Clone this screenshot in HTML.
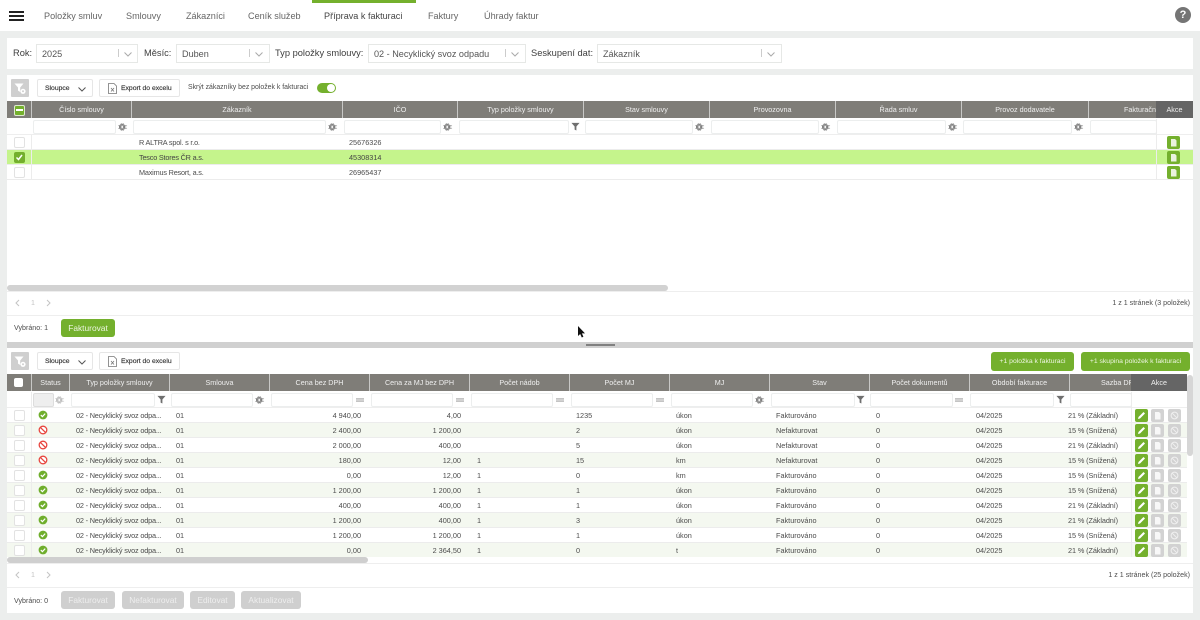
<!DOCTYPE html>
<html lang="cs"><head><meta charset="utf-8"><title>Příprava k fakturaci</title>
<style>
html,body{margin:0;padding:0;width:1200px;height:620px;overflow:hidden;background:#eceeed}
body{font-family:"Liberation Sans",sans-serif;color:#4a4a4a}
#w{position:relative;width:1200px;height:620px;overflow:hidden;filter:blur(.3px)}
.a{position:absolute;white-space:nowrap}
.p{position:absolute;background:#fff}
.nav{top:9px;font-size:9.1px;line-height:14px;color:#666}
.lb{top:46px;font-size:9.3px;line-height:14px;color:#3e3e3e}
.sel{position:absolute;top:44px;height:17px;background:#fff;border:1px solid #e6e8e6;font-size:9.1px;line-height:18px;color:#555;text-indent:5px}
.sep{position:absolute;top:49px;width:1px;height:8px;background:#ccc}
.btn{position:absolute;height:16px;background:#fff;border:1px solid #e6e6e6;border-radius:2px;font-size:6.8px;line-height:17px;color:#333;box-sizing:content-box;-webkit-text-stroke:.15px #333}
.fb{position:absolute;left:11px;width:18px;height:18px;background:#cfcfcf;border-radius:1px}
.h{position:absolute;height:17px;background:#7f7d78;color:#efefef;font-size:7.2px;line-height:17px;text-align:center;border-right:1px solid #c8c8c6;overflow:hidden;white-space:nowrap}
.ak{background:#656565;border-right:0;z-index:3}
.in{position:absolute;height:12px;background:#fff;border:1px solid #eceeee;border-radius:2px;box-sizing:content-box}
.ln{position:absolute;height:1px;background:#eeeeee}
.r{position:absolute;left:7px;height:14px;border-bottom:1px solid #ececec;font-size:7.3px;line-height:15px;color:#4c4c4c}
.r span{position:absolute;white-space:nowrap}
.r .nm{left:132px;letter-spacing:-.2px}
.t{background:#f4f8f0}
.cb{position:absolute;left:6.5px;top:2px;width:9px;height:9px;background:#fff;border:1px solid #e2e2e2;border-radius:2px}
.ty{left:69px;letter-spacing:-.18px}.sm{left:169px}.ce{left:254px;width:100px;text-align:right}.cj{left:354px;width:100px;text-align:right}
.na{left:470px}.mj{left:569px}.me{left:669px}.sv{left:769px}.dk{left:869px}.ob{left:969px}.sa{left:1061px;letter-spacing:-.1px}
.ic{position:absolute;top:1px;width:13px;height:13px;border-radius:2px}
.i1{left:1128px;background:#74b02d}.i2{left:1144px;background:#d2d2d2}.i3{left:1161px;background:#d2d2d2}
.gb{position:absolute;border-radius:3px;background:#74b02d;color:#eef6e2;text-align:center;font-size:8.4px}
.db{position:absolute;top:591px;height:18px;line-height:18px;border-radius:3px;background:#cfcfcf;color:#eeeeee;text-align:center;font-size:8.4px}
.sm2{font-size:7.1px;line-height:12px;color:#4c4c4c}
svg{position:absolute;overflow:visible}
</style></head><body><div id="w">

<svg width="0" height="0" style="left:0;top:0">
<defs>
<symbol id="gear" viewBox="0 0 10 10"><circle cx="4.2" cy="5" r="2.3" fill="none" stroke="#808080" stroke-width="1.9"/><path d="M.3 3.4H8M.3 6.6H8M3.2 1V9M5.2 1V9" stroke="#999" stroke-width=".7"/><circle cx="8.6" cy="3.8" r=".5" fill="#999"/><circle cx="8.6" cy="6.2" r=".5" fill="#999"/></symbol>
<symbol id="fil" viewBox="0 0 10 10"><path d="M.5 1H9.5L6 5V9.5L4 8.5V5Z" fill="#6f6f6f"/></symbol>
<symbol id="eq" viewBox="0 0 10 10"><path d="M0 3.7H10M0 6.3H10" stroke="#888" stroke-width="1.1"/></symbol>
<symbol id="ok" viewBox="0 0 10 10"><circle cx="5" cy="5" r="4.4" fill="#6fae2c"/><path d="M2.8 5.1L4.4 6.6L7.2 3.6" fill="none" stroke="#fff" stroke-width="1.2"/></symbol>
<symbol id="ban" viewBox="0 0 10 10"><circle cx="5" cy="5" r="3.8" fill="#fff" stroke="#e8453f" stroke-width="1.3"/><path d="M2.4 2.4L7.6 7.6" stroke="#e8453f" stroke-width="1.3"/></symbol>
<symbol id="pen" viewBox="0 0 13 13"><path d="M3 10L3.5 8L8.5 3L10 4.5L5 9.5Z" fill="#fff"/></symbol>
<symbol id="doc" viewBox="0 0 13 13"><path d="M4 3H8L9.5 4.5V10.5H4Z" fill="#fff" opacity=".85"/></symbol>
<symbol id="no" viewBox="0 0 13 13"><circle cx="6.5" cy="6.5" r="3.4" fill="none" stroke="#f0f0f0" stroke-width="1"/><path d="M4.2 4.2L8.8 8.8" stroke="#f0f0f0" stroke-width="1"/></symbol>
<symbol id="fb" viewBox="0 0 18 18"><path d="M3.5 4.5H12.5L9.2 8.5V13L7 11.6V8.5Z" fill="#fff"/><circle cx="12" cy="12.3" r="2.6" fill="#fff"/><circle cx="12" cy="12.3" r="1" fill="#cfcfcf"/></symbol>
<symbol id="xl" viewBox="0 0 9 11"><path d="M.5.5H6L8.5 3V10.5H.5Z" fill="#fff" stroke="#777" stroke-width=".8"/><path d="M3 5L6 8.5M6 5L3 8.5" stroke="#777" stroke-width=".8"/></symbol>
<symbol id="chev" viewBox="0 0 8 5"><path d="M.5.5L4 4L7.5.5" fill="none" stroke="currentColor" stroke-width="1"/></symbol>
<symbol id="pg" viewBox="0 0 40 8"><path d="M4 1L1 4L4 7M32 1L35 4L32 7" fill="none" stroke="#c4c4c4" stroke-width="1"/></symbol>
</defs></svg>

<!-- NAV -->
<div class="p" style="left:0;top:0;width:1200px;height:31px"></div>
<div class="a" style="left:312px;top:0;width:104px;height:3px;background:#74b02d"></div>
<div class="a" style="left:9px;top:11px;width:15px;height:2px;background:#222"></div>
<div class="a" style="left:9px;top:15px;width:15px;height:2px;background:#222"></div>
<div class="a" style="left:9px;top:19px;width:15px;height:2px;background:#222"></div>
<div class="a nav" style="left:44px">Položky smluv</div>
<div class="a nav" style="left:126px">Smlouvy</div>
<div class="a nav" style="left:186px">Zákazníci</div>
<div class="a nav" style="left:248px">Ceník služeb</div>
<div class="a nav" style="left:324px;color:#444">Příprava k fakturaci</div>
<div class="a nav" style="left:428px">Faktury</div>
<div class="a nav" style="left:484px">Úhrady faktur</div>
<div class="a" style="left:1175px;top:7px;width:16px;height:16px;border-radius:50%;background:#757575;color:#fff;font-size:11px;font-weight:bold;line-height:16px;text-align:center">?</div>

<!-- FILTER PANEL -->
<div class="p" style="left:7px;top:38px;width:1186px;height:31px"></div>
<div class="a lb" style="left:13px">Rok:</div>
<div class="sel" style="left:36px;width:100px">2025</div><div class="sep" style="left:118px"></div>
<svg width="8" height="5" style="left:124px;top:52px;color:#aaa"><use href="#chev"/></svg>
<div class="a lb" style="left:144px">Měsíc:</div>
<div class="sel" style="left:176px;width:92px">Duben</div><div class="sep" style="left:249px"></div>
<svg width="8" height="5" style="left:255px;top:52px;color:#aaa"><use href="#chev"/></svg>
<div class="a lb" style="left:275px">Typ položky smlouvy:</div>
<div class="sel" style="left:368px;width:156px">02 - Necyklický svoz odpadu</div><div class="sep" style="left:505px"></div>
<svg width="8" height="5" style="left:511px;top:52px;color:#aaa"><use href="#chev"/></svg>
<div class="a lb" style="left:531px">Seskupení dat:</div>
<div class="sel" style="left:597px;width:183px">Zákazník</div><div class="sep" style="left:761px"></div>
<svg width="8" height="5" style="left:767px;top:52px;color:#aaa"><use href="#chev"/></svg>

<!-- PANEL 1 -->
<div class="p" style="left:7px;top:75px;width:1186px;height:267px"></div>
<div class="fb" style="top:79px"><svg width="18" height="18" style="left:0;top:0"><use href="#fb"/></svg></div>
<div class="btn" style="left:37px;top:79px;width:54px"><span class="a" style="left:7px">Sloupce</span><svg width="8" height="5" style="left:40px;top:7px;color:#555"><use href="#chev"/></svg></div>
<div class="btn" style="left:99px;top:79px;width:79px"><svg width="9" height="11" style="left:8px;top:3px"><use href="#xl"/></svg><span class="a" style="left:21px">Export do excelu</span></div>
<div class="a" style="left:188px;top:82px;font-size:6.9px;line-height:12px;color:#4c4c4c">Skrýt zákazníky bez položek k fakturaci</div>
<div class="a" style="left:317px;top:83px;width:19px;height:10px;border-radius:5px;background:#74b02d"></div>
<div class="a" style="left:327px;top:84px;width:8px;height:8px;border-radius:50%;background:#fff"></div>

<div class="h" style="left:7px;top:101px;width:24px"></div>
<div class="a" style="left:14px;top:105px;width:9px;height:9px;background:#74b02d;border:1px solid #dfe9d0;border-radius:2px"></div>
<div class="a" style="left:16px;top:109px;width:7px;height:2px;background:#fff"></div>
<div class="h" style="left:32px;top:101px;width:99px">Číslo smlouvy</div>
<div class="h" style="left:132px;top:101px;width:210px">Zákazník</div>
<div class="h" style="left:343px;top:101px;width:114px">IČO</div>
<div class="h" style="left:458px;top:101px;width:125px">Typ položky smlouvy</div>
<div class="h" style="left:584px;top:101px;width:125px">Stav smlouvy</div>
<div class="h" style="left:710px;top:101px;width:125px">Provozovna</div>
<div class="h" style="left:836px;top:101px;width:125px">Řada smluv</div>
<div class="h" style="left:962px;top:101px;width:126px">Provoz dodavatele</div>
<div class="h" style="left:1089px;top:101px;width:67px;border-right:0;text-indent:35px;text-align:left">Fakturační</div>
<div class="h ak" style="left:1156px;top:101px;width:37px">Akce</div>

<div class="in" style="left:33px;top:120px;width:81px"></div><svg width="10" height="10" style="left:118px;top:122px"><use href="#gear"/></svg>
<div class="in" style="left:133px;top:120px;width:191px"></div><svg width="10" height="10" style="left:328px;top:122px"><use href="#gear"/></svg>
<div class="in" style="left:344px;top:120px;width:95px"></div><svg width="10" height="10" style="left:443px;top:122px"><use href="#gear"/></svg>
<div class="in" style="left:459px;top:120px;width:108px"></div><svg width="9" height="9" style="left:571px;top:122px"><use href="#fil"/></svg>
<div class="in" style="left:585px;top:120px;width:106px"></div><svg width="10" height="10" style="left:695px;top:122px"><use href="#gear"/></svg>
<div class="in" style="left:711px;top:120px;width:106px"></div><svg width="10" height="10" style="left:821px;top:122px"><use href="#gear"/></svg>
<div class="in" style="left:837px;top:120px;width:107px"></div><svg width="10" height="10" style="left:948px;top:122px"><use href="#gear"/></svg>
<div class="in" style="left:963px;top:120px;width:107px"></div><svg width="10" height="10" style="left:1074px;top:122px"><use href="#gear"/></svg>
<div class="in" style="left:1090px;top:120px;width:65px"></div>
<div class="ln" style="left:7px;top:134px;width:1186px"></div>

<div class="r" style="top:135px;width:1186px"><div class="cb"></div><span class="nm">R ALTRA spol. s r.o.</span><span style="left:342px">25676326</span></div>
<div class="r" style="top:150px;width:1186px;background:#c5f48c"><div class="cb" style="background:#74b02d;border-color:#74b02d"></div><svg width="9" height="9" style="left:8px;top:3px"><path d="M1.5 4.5L3.5 6.5L7 2" fill="none" stroke="#fff" stroke-width="1.5"/></svg><span class="nm" style="color:#444">Tesco Stores ČR a.s.</span><span style="left:342px;color:#444">45308314</span></div>
<div class="r" style="top:165px;width:1186px"><div class="cb"></div><span class="nm">Maximus Resort, a.s.</span><span style="left:342px">26965437</span></div>
<div class="a" style="left:31px;top:135px;width:1px;height:45px;background:#ececec"></div>
<div class="a" style="left:1156px;top:119px;width:1px;height:61px;background:#ececec"></div>
<div class="ic" style="left:1167px;top:136px;background:#74b02d"><svg width="13" height="13" style="left:0;top:0"><use href="#doc"/></svg></div>
<div class="ic" style="left:1167px;top:151px;background:#74b02d"><svg width="13" height="13" style="left:0;top:0"><use href="#doc"/></svg></div>
<div class="ic" style="left:1167px;top:166px;background:#74b02d"><svg width="13" height="13" style="left:0;top:0"><use href="#doc"/></svg></div>

<div class="a" style="left:7px;top:285px;width:661px;height:6px;border-radius:3px;background:#d2d2d2"></div>
<div class="ln" style="left:7px;top:291px;width:1186px"></div>
<svg width="40" height="8" style="left:15px;top:299px"><use href="#pg"/></svg>
<div class="a sm2" style="left:31px;top:297px;color:#c4c4c4">1</div>
<div class="a sm2" style="right:10px;top:297px">1 z 1 stránek (3 položek)</div>
<div class="ln" style="left:7px;top:315px;width:1186px"></div>
<div class="a sm2" style="left:14px;top:322px">Vybráno: 1</div>
<div class="gb" style="left:61px;top:319px;width:54px;height:18px;line-height:18px">Fakturovat</div>
<svg width="9" height="12" style="left:577px;top:326px"><path d="M1 0V10L3.2 8L4.8 11.5L6.4 10.8L4.9 7.4H8Z" fill="#111"/></svg>

<!-- SPLITTER -->
<div class="a" style="left:7px;top:342px;width:1186px;height:6px;background:#d0d0d0"></div>
<div class="a" style="left:586px;top:344px;width:29px;height:2px;background:#808080"></div>

<!-- PANEL 2 -->
<div class="p" style="left:7px;top:348px;width:1186px;height:265px"></div>
<div class="fb" style="top:352px"><svg width="18" height="18" style="left:0;top:0"><use href="#fb"/></svg></div>
<div class="btn" style="left:37px;top:352px;width:54px"><span class="a" style="left:7px">Sloupce</span><svg width="8" height="5" style="left:40px;top:7px;color:#555"><use href="#chev"/></svg></div>
<div class="btn" style="left:99px;top:352px;width:79px"><svg width="9" height="11" style="left:8px;top:3px"><use href="#xl"/></svg><span class="a" style="left:21px">Export do excelu</span></div>
<div class="gb" style="left:991px;top:352px;width:83px;height:19px;line-height:19px;font-size:6.8px">+1 položka k fakturaci</div>
<div class="gb" style="left:1081px;top:352px;width:109px;height:19px;line-height:19px;font-size:6.8px">+1 skupina položek k fakturaci</div>

<div class="h" style="left:7px;top:374px;width:24px"></div>
<div class="a" style="left:14px;top:378px;width:9px;height:9px;background:#fff;border-radius:2px"></div>
<div class="h" style="left:32px;top:374px;width:37px">Status</div>
<div class="h" style="left:70px;top:374px;width:99px">Typ položky smlouvy</div>
<div class="h" style="left:170px;top:374px;width:99px">Smlouva</div>
<div class="h" style="left:270px;top:374px;width:99px">Cena bez DPH</div>
<div class="h" style="left:370px;top:374px;width:99px">Cena za MJ bez DPH</div>
<div class="h" style="left:470px;top:374px;width:99px">Počet nádob</div>
<div class="h" style="left:570px;top:374px;width:99px">Počet MJ</div>
<div class="h" style="left:670px;top:374px;width:99px">MJ</div>
<div class="h" style="left:770px;top:374px;width:99px">Stav</div>
<div class="h" style="left:870px;top:374px;width:99px">Počet dokumentů</div>
<div class="h" style="left:970px;top:374px;width:99px">Období fakturace</div>
<div class="h" style="left:1070px;top:374px;width:61px;border-right:0;text-indent:31px;text-align:left">Sazba DPH</div>
<div class="h ak" style="left:1131px;top:374px;width:56px">Akce</div>

<div class="in" style="left:33px;top:393px;width:19px;background:#eeeeee;border-color:#ddd"></div><svg width="10" height="10" style="left:55px;top:395px;opacity:.5"><use href="#gear"/></svg>
<div class="in" style="left:71px;top:393px;width:82px"></div><svg width="9" height="9" style="left:157px;top:395px"><use href="#fil"/></svg>
<div class="in" style="left:171px;top:393px;width:80px"></div><svg width="10" height="10" style="left:255px;top:395px"><use href="#gear"/></svg>
<div class="in" style="left:271px;top:393px;width:80px"></div><svg width="8" height="8" style="left:356px;top:396px"><use href="#eq"/></svg>
<div class="in" style="left:371px;top:393px;width:80px"></div><svg width="8" height="8" style="left:456px;top:396px"><use href="#eq"/></svg>
<div class="in" style="left:471px;top:393px;width:80px"></div><svg width="8" height="8" style="left:556px;top:396px"><use href="#eq"/></svg>
<div class="in" style="left:571px;top:393px;width:80px"></div><svg width="8" height="8" style="left:656px;top:396px"><use href="#eq"/></svg>
<div class="in" style="left:671px;top:393px;width:80px"></div><svg width="10" height="10" style="left:755px;top:395px"><use href="#gear"/></svg>
<div class="in" style="left:771px;top:393px;width:82px"></div><svg width="9" height="9" style="left:856px;top:395px"><use href="#fil"/></svg>
<div class="in" style="left:870px;top:393px;width:81px"></div><svg width="8" height="8" style="left:955px;top:396px"><use href="#eq"/></svg>
<div class="in" style="left:970px;top:393px;width:82px"></div><svg width="9" height="9" style="left:1056px;top:395px"><use href="#fil"/></svg>
<div class="in" style="left:1070px;top:393px;width:60px"></div>
<div class="ln" style="left:7px;top:407px;width:1180px"></div>

<div class="r" style="top:408px;width:1180px"><div class="cb"></div><svg viewBox="0 0 10 10" style="left:31px;top:2px;width:10px;height:10px"><use href="#ok"/></svg><span class="ty">02 - Necyklický svoz odpa...</span><span class="sm">01</span><span class="ce">4 940,00</span><span class="cj">4,00</span><span class="mj">1235</span><span class="me">úkon</span><span class="sv">Fakturováno</span><span class="dk">0</span><span class="ob">04/2025</span><span class="sa">21 % (Základní)</span><div class="ic i1"><svg width="13" height="13" style="left:0;top:0"><use href="#pen"/></svg></div><div class="ic i2"><svg width="13" height="13" style="left:0;top:0"><use href="#doc"/></svg></div><div class="ic i3"><svg width="13" height="13" style="left:0;top:0"><use href="#no"/></svg></div></div>
<div class="r t" style="top:423px;width:1180px"><div class="cb"></div><svg viewBox="0 0 10 10" style="left:31px;top:2px;width:10px;height:10px"><use href="#ban"/></svg><span class="ty">02 - Necyklický svoz odpa...</span><span class="sm">01</span><span class="ce">2 400,00</span><span class="cj">1 200,00</span><span class="mj">2</span><span class="me">úkon</span><span class="sv">Nefakturovat</span><span class="dk">0</span><span class="ob">04/2025</span><span class="sa">15 % (Snížená)</span><div class="ic i1"><svg width="13" height="13" style="left:0;top:0"><use href="#pen"/></svg></div><div class="ic i2"><svg width="13" height="13" style="left:0;top:0"><use href="#doc"/></svg></div><div class="ic i3"><svg width="13" height="13" style="left:0;top:0"><use href="#no"/></svg></div></div>
<div class="r" style="top:438px;width:1180px"><div class="cb"></div><svg viewBox="0 0 10 10" style="left:31px;top:2px;width:10px;height:10px"><use href="#ban"/></svg><span class="ty">02 - Necyklický svoz odpa...</span><span class="sm">01</span><span class="ce">2 000,00</span><span class="cj">400,00</span><span class="mj">5</span><span class="me">úkon</span><span class="sv">Nefakturovat</span><span class="dk">0</span><span class="ob">04/2025</span><span class="sa">21 % (Základní)</span><div class="ic i1"><svg width="13" height="13" style="left:0;top:0"><use href="#pen"/></svg></div><div class="ic i2"><svg width="13" height="13" style="left:0;top:0"><use href="#doc"/></svg></div><div class="ic i3"><svg width="13" height="13" style="left:0;top:0"><use href="#no"/></svg></div></div>
<div class="r t" style="top:453px;width:1180px"><div class="cb"></div><svg viewBox="0 0 10 10" style="left:31px;top:2px;width:10px;height:10px"><use href="#ban"/></svg><span class="ty">02 - Necyklický svoz odpa...</span><span class="sm">01</span><span class="ce">180,00</span><span class="cj">12,00</span><span class="na">1</span><span class="mj">15</span><span class="me">km</span><span class="sv">Nefakturovat</span><span class="dk">0</span><span class="ob">04/2025</span><span class="sa">15 % (Snížená)</span><div class="ic i1"><svg width="13" height="13" style="left:0;top:0"><use href="#pen"/></svg></div><div class="ic i2"><svg width="13" height="13" style="left:0;top:0"><use href="#doc"/></svg></div><div class="ic i3"><svg width="13" height="13" style="left:0;top:0"><use href="#no"/></svg></div></div>
<div class="r" style="top:468px;width:1180px"><div class="cb"></div><svg viewBox="0 0 10 10" style="left:31px;top:2px;width:10px;height:10px"><use href="#ok"/></svg><span class="ty">02 - Necyklický svoz odpa...</span><span class="sm">01</span><span class="ce">0,00</span><span class="cj">12,00</span><span class="na">1</span><span class="mj">0</span><span class="me">km</span><span class="sv">Fakturováno</span><span class="dk">0</span><span class="ob">04/2025</span><span class="sa">15 % (Snížená)</span><div class="ic i1"><svg width="13" height="13" style="left:0;top:0"><use href="#pen"/></svg></div><div class="ic i2"><svg width="13" height="13" style="left:0;top:0"><use href="#doc"/></svg></div><div class="ic i3"><svg width="13" height="13" style="left:0;top:0"><use href="#no"/></svg></div></div>
<div class="r t" style="top:483px;width:1180px"><div class="cb"></div><svg viewBox="0 0 10 10" style="left:31px;top:2px;width:10px;height:10px"><use href="#ok"/></svg><span class="ty">02 - Necyklický svoz odpa...</span><span class="sm">01</span><span class="ce">1 200,00</span><span class="cj">1 200,00</span><span class="na">1</span><span class="mj">1</span><span class="me">úkon</span><span class="sv">Fakturováno</span><span class="dk">0</span><span class="ob">04/2025</span><span class="sa">15 % (Snížená)</span><div class="ic i1"><svg width="13" height="13" style="left:0;top:0"><use href="#pen"/></svg></div><div class="ic i2"><svg width="13" height="13" style="left:0;top:0"><use href="#doc"/></svg></div><div class="ic i3"><svg width="13" height="13" style="left:0;top:0"><use href="#no"/></svg></div></div>
<div class="r" style="top:498px;width:1180px"><div class="cb"></div><svg viewBox="0 0 10 10" style="left:31px;top:2px;width:10px;height:10px"><use href="#ok"/></svg><span class="ty">02 - Necyklický svoz odpa...</span><span class="sm">01</span><span class="ce">400,00</span><span class="cj">400,00</span><span class="na">1</span><span class="mj">1</span><span class="me">úkon</span><span class="sv">Fakturováno</span><span class="dk">0</span><span class="ob">04/2025</span><span class="sa">21 % (Základní)</span><div class="ic i1"><svg width="13" height="13" style="left:0;top:0"><use href="#pen"/></svg></div><div class="ic i2"><svg width="13" height="13" style="left:0;top:0"><use href="#doc"/></svg></div><div class="ic i3"><svg width="13" height="13" style="left:0;top:0"><use href="#no"/></svg></div></div>
<div class="r t" style="top:513px;width:1180px"><div class="cb"></div><svg viewBox="0 0 10 10" style="left:31px;top:2px;width:10px;height:10px"><use href="#ok"/></svg><span class="ty">02 - Necyklický svoz odpa...</span><span class="sm">01</span><span class="ce">1 200,00</span><span class="cj">400,00</span><span class="na">1</span><span class="mj">3</span><span class="me">úkon</span><span class="sv">Fakturováno</span><span class="dk">0</span><span class="ob">04/2025</span><span class="sa">21 % (Základní)</span><div class="ic i1"><svg width="13" height="13" style="left:0;top:0"><use href="#pen"/></svg></div><div class="ic i2"><svg width="13" height="13" style="left:0;top:0"><use href="#doc"/></svg></div><div class="ic i3"><svg width="13" height="13" style="left:0;top:0"><use href="#no"/></svg></div></div>
<div class="r" style="top:528px;width:1180px"><div class="cb"></div><svg viewBox="0 0 10 10" style="left:31px;top:2px;width:10px;height:10px"><use href="#ok"/></svg><span class="ty">02 - Necyklický svoz odpa...</span><span class="sm">01</span><span class="ce">1 200,00</span><span class="cj">1 200,00</span><span class="na">1</span><span class="mj">1</span><span class="me">úkon</span><span class="sv">Fakturováno</span><span class="dk">0</span><span class="ob">04/2025</span><span class="sa">15 % (Snížená)</span><div class="ic i1"><svg width="13" height="13" style="left:0;top:0"><use href="#pen"/></svg></div><div class="ic i2"><svg width="13" height="13" style="left:0;top:0"><use href="#doc"/></svg></div><div class="ic i3"><svg width="13" height="13" style="left:0;top:0"><use href="#no"/></svg></div></div>
<div class="r t" style="top:543px;width:1180px;border-bottom:0"><div class="cb"></div><svg viewBox="0 0 10 10" style="left:31px;top:2px;width:10px;height:10px"><use href="#ok"/></svg><span class="ty">02 - Necyklický svoz odpa...</span><span class="sm">01</span><span class="ce">0,00</span><span class="cj">2 364,50</span><span class="na">1</span><span class="mj">0</span><span class="me">t</span><span class="sv">Fakturováno</span><span class="dk">0</span><span class="ob">04/2025</span><span class="sa">21 % (Základní)</span><div class="ic i1"><svg width="13" height="13" style="left:0;top:0"><use href="#pen"/></svg></div><div class="ic i2"><svg width="13" height="13" style="left:0;top:0"><use href="#doc"/></svg></div><div class="ic i3"><svg width="13" height="13" style="left:0;top:0"><use href="#no"/></svg></div></div>
<div class="a" style="left:31px;top:392px;width:1px;height:165px;background:#ececec"></div>
<div class="a" style="left:1131px;top:392px;width:1px;height:165px;background:#ececec"></div>

<div class="a" style="left:1187px;top:375px;width:6px;height:81px;border-radius:3px;background:#d6d6d6"></div>
<div class="a" style="left:7px;top:557px;width:361px;height:6px;border-radius:3px;background:#cfcfcf"></div>
<div class="ln" style="left:7px;top:563px;width:1186px"></div>
<svg width="40" height="8" style="left:15px;top:571px"><use href="#pg"/></svg>
<div class="a sm2" style="left:31px;top:569px;color:#c4c4c4">1</div>
<div class="a sm2" style="right:10px;top:569px">1 z 1 stránek (25 položek)</div>
<div class="ln" style="left:7px;top:587px;width:1186px"></div>
<div class="a sm2" style="left:14px;top:595px">Vybráno: 0</div>
<div class="db" style="left:61px;width:54px">Fakturovat</div>
<div class="db" style="left:122px;width:62px">Nefakturovat</div>
<div class="db" style="left:190px;width:45px">Editovat</div>
<div class="db" style="left:241px;width:60px">Aktualizovat</div>
</div></body></html>
